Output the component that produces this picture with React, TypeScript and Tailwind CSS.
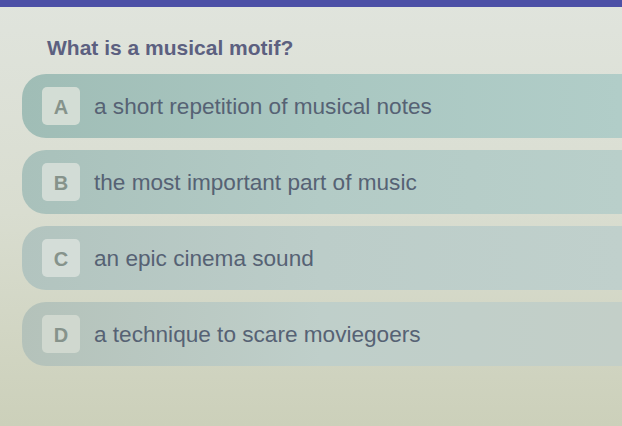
import React from "react";

type Choice = {
  letter: string;
  text: string;
  row: string;
  box: string;
};

const choices: Choice[] = [
  {
    letter: "A",
    text: "a short repetition of musical notes",
    row: "bg-linear-to-r from-[#a0bdb6] via-[#a9c7c1] to-[#b1cdc8]",
    box: "bg-[#d3ddd5]",
  },
  {
    letter: "B",
    text: "the most important part of music",
    row: "bg-linear-to-r from-[#a9c1bb] via-[#b3cbc6] to-[#b9cfca]",
    box: "bg-[#d2dcd6]",
  },
  {
    letter: "C",
    text: "an epic cinema sound",
    row: "bg-linear-to-r from-[#b2c4bf] via-[#bccdc9] to-[#c0d0cc]",
    box: "bg-[#d4ddd8]",
  },
  {
    letter: "D",
    text: "a technique to scare moviegoers",
    row: "bg-linear-to-r from-[#b4c2ba] via-[#bfcfca] to-[#c3cfc8]",
    box: "bg-[#d0d8cf]",
  },
];

function ChoiceRow({ choice }: { choice: Choice }) {
  return (
    <div
      className={`flex h-[64px] items-center gap-[14px] rounded-l-[24px] pl-[20px] ${choice.row}`}
    >
      <div
        className={`flex h-[38px] w-[38px] shrink-0 items-center justify-center rounded-[5px] pt-[2px] text-[20px] font-bold text-[#86938b] ${choice.box}`}
      >
        {choice.letter}
      </div>
      <span className="pt-[3px] text-[22.6px] leading-none text-[#566274]">
        {choice.text}
      </span>
    </div>
  );
}

export default function App() {
  return (
    <div
      className="flex h-[426px] w-[622px] flex-col overflow-hidden bg-linear-to-b from-[#e0e4dd] via-[#d9ddd0] to-[#ccd0ba]"
      style={{ fontFamily: '"Liberation Sans", Arial, sans-serif' }}
    >
      <div className="h-[7px] shrink-0 bg-[#4c50a6]" />
      <h1 className="pl-[47px] pt-[29px] text-[21px] font-bold leading-[24px] text-[#5c6080]">
        What is a musical motif?
      </h1>
      <div className="mt-[14px] flex flex-col gap-[12px] pl-[22px]">
        {choices.map((c) => (
          <ChoiceRow key={c.letter} choice={c} />
        ))}
      </div>
    </div>
  );
}
